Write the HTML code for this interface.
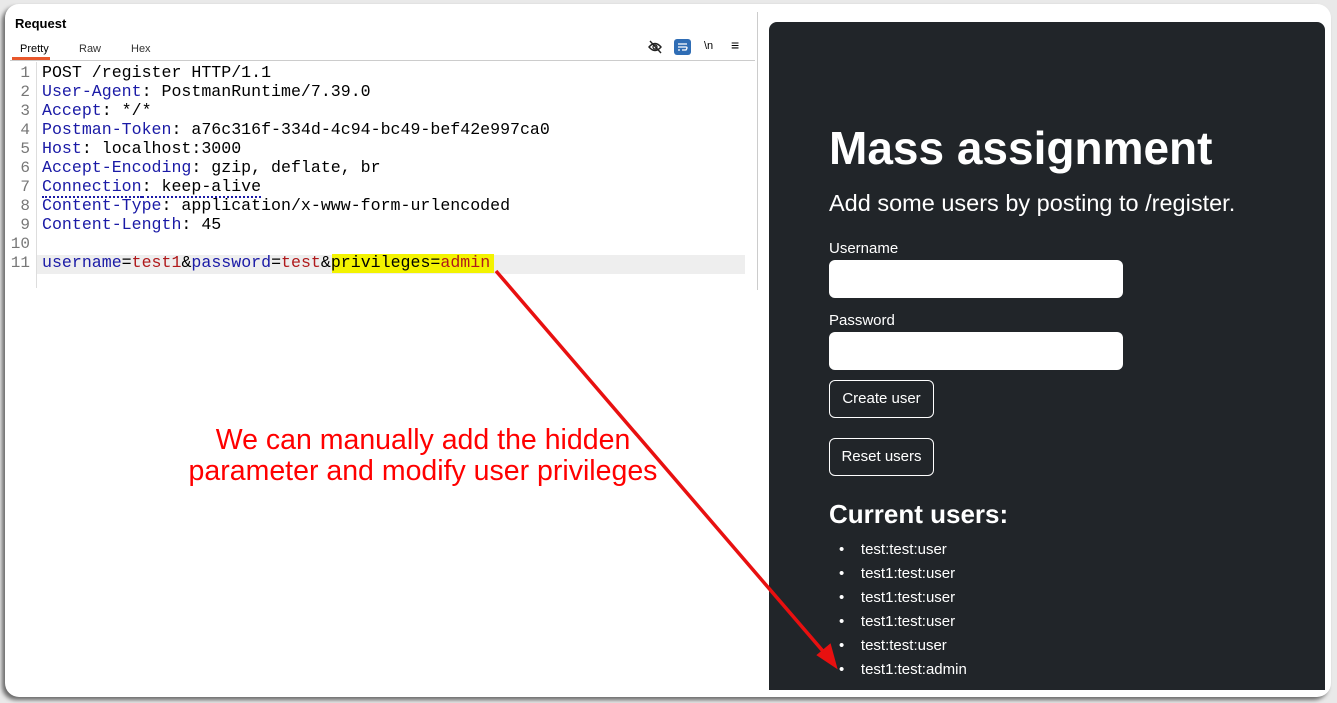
<!DOCTYPE html>
<html><head><meta charset="utf-8">
<style>
*{margin:0;padding:0;box-sizing:border-box}
body{width:1337px;height:703px;background:#e9e9e9;position:relative;overflow:hidden;font-family:"Liberation Sans",sans-serif}
.card{position:absolute;left:5px;top:4px;width:1326px;height:693px;background:#fff;border-radius:14px;box-shadow:-3px 3px 4px rgba(0,0,0,.55)}
.ab{position:absolute}
.code{position:absolute;left:42px;font-family:"Liberation Mono",monospace;font-size:16.6px;color:#000;white-space:pre;line-height:19px}
.ln{position:absolute;left:10px;width:20px;text-align:right;font-family:"Liberation Mono",monospace;font-size:16px;color:#777;line-height:19px}
.k{color:#1a1aa6}.v{color:#b0191b}
.dark{position:absolute;left:769px;top:22px;width:556px;height:668px;background:#212529;border-radius:8px 8px 0 0;color:#fff;font-family:"Liberation Sans",sans-serif}
.inp{position:absolute;left:60px;width:294px;height:38px;background:#fff;border-radius:6px}
.btn{position:absolute;left:60px;width:105px;height:38px;border:1px solid #fff;border-radius:6px;font-size:15px;text-align:center;line-height:36px}
.note{position:absolute;color:#f00;font-size:28.5px;font-family:"Liberation Sans",sans-serif;text-align:center;width:600px;left:123px;line-height:31px}
</style></head><body>
<div class="card"></div>
<div class="ab" style="left:15px;top:16px;font-weight:bold;font-size:13px">Request</div>
<div class="ab" style="left:20px;top:43px;font-size:11px">Pretty</div>
<div class="ab" style="left:79px;top:43px;font-size:11px;color:#333">Raw</div>
<div class="ab" style="left:131px;top:43px;font-size:11px;color:#333">Hex</div>
<div class="ab" style="left:12px;top:57px;width:38px;height:3px;background:#e8572b"></div>
<div class="ab" style="left:10px;top:60px;width:745px;height:1px;background:#ccc"></div>
<div class="ab" style="left:757px;top:12px;width:1px;height:278px;background:#ccc"></div>
<svg class="ab" style="left:648px;top:40px" width="15" height="14" viewBox="0 0 15 14"><path d="M1 7Q7 0 13 7Q7 14 1 7Z" fill="none" stroke="#222" stroke-width="1.4"/><circle cx="7" cy="7" r="2" fill="none" stroke="#222" stroke-width="1.3"/><path d="M2 1L13 13" stroke="#222" stroke-width="1.4"/></svg>
<div class="ab" style="left:674px;top:39px;width:17px;height:16px;background:#2f6db5;border-radius:3px"></div>
<svg class="ab" style="left:676px;top:41px" width="13" height="12" viewBox="0 0 13 12"><path d="M2 3H11M2 6H10Q12 6 10 9H6M2 9H4" stroke="#fff" stroke-width="1.3" fill="none"/></svg>
<div class="ab" style="left:704px;top:40px;font-size:11px">\n</div>
<div class="ab" style="left:731px;top:37px;font-size:14px">≡</div>
<div class="ab" style="left:36px;top:62px;width:1px;height:226px;background:#ddd"></div>
<div class="ab" style="left:37px;top:255px;width:708px;height:19px;background:#eee"></div>
<div class="ab" style="left:332px;top:254px;width:162px;height:19px;background:#f3f300"></div>
<div class="ln" style="top:64px">1<br>2<br>3<br>4<br>5<br>6<br>7<br>8<br>9<br>10<br>11</div>
<div class="code" style="top:63px">POST /register HTTP/1.1
<span class="k">User-Agent</span>: PostmanRuntime/7.39.0
<span class="k">Accept</span>: */*
<span class="k">Postman-Token</span>: a76c316f-334d-4c94-bc49-bef42e997ca0
<span class="k">Host</span>: localhost:3000
<span class="k">Accept-Encoding</span>: gzip, deflate, br
<span class="k" style="border-bottom:2px dotted #1a1aa6">Connection</span><span style="border-bottom:2px dotted #1a1aa6">: keep-alive</span>
<span class="k">Content-Type</span>: application/x-www-form-urlencoded
<span class="k">Content-Length</span>: 45

<span class="k">username</span>=<span class="v">test1</span>&amp;<span class="k">password</span>=<span class="v">test</span>&amp;privileges=<span class="v">admin</span></div>
<div class="dark">
<div class="ab" style="left:60px;top:99px;font-size:46px;font-weight:bold">Mass assignment</div>
<div class="ab" style="left:60px;top:168px;font-size:23.5px">Add some users by posting to /register.</div>
<div class="ab" style="left:60px;top:218px;font-size:15px">Username</div>
<div class="inp" style="top:238px"></div>
<div class="ab" style="left:60px;top:290px;font-size:15px">Password</div>
<div class="inp" style="top:310px"></div>
<div class="btn" style="top:358px">Create user</div>
<div class="btn" style="top:416px">Reset users</div>
<div class="ab" style="left:60px;top:477px;font-size:26px;font-weight:bold">Current users:</div>
<div class="ab" style="left:70px;top:516px;font-size:15px;line-height:24px">
<div>•&nbsp;&nbsp;&nbsp;&nbsp;test:test:user</div><div>•&nbsp;&nbsp;&nbsp;&nbsp;test1:test:user</div><div>•&nbsp;&nbsp;&nbsp;&nbsp;test1:test:user</div><div>•&nbsp;&nbsp;&nbsp;&nbsp;test1:test:user</div><div>•&nbsp;&nbsp;&nbsp;&nbsp;test:test:user</div><div>•&nbsp;&nbsp;&nbsp;&nbsp;test1:test:admin</div>
</div>
</div>
<div class="note" style="top:425px">We can manually add the hidden<br>parameter and modify user privileges</div>
<svg class="ab" style="left:0;top:0" width="1337" height="703"><path d="M496 271L828 657" stroke="#e81010" stroke-width="3.5"/><path d="M836 667L818 655L830 645Z" fill="#e81010" stroke="#e81010" stroke-width="2"/></svg>
</body></html>
